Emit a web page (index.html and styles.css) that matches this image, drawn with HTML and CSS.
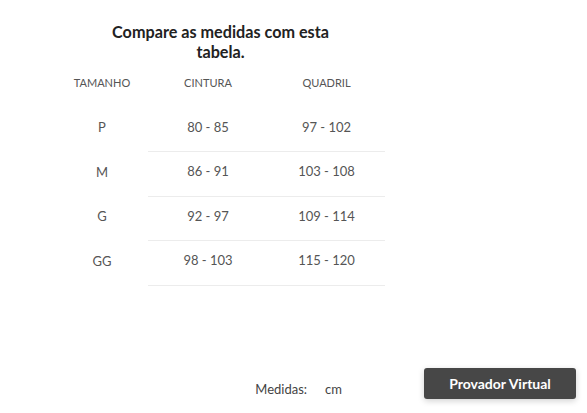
FILE: index.html
```html
<!DOCTYPE html>
<html lang="pt">
<head>
<meta charset="utf-8">
<link rel="stylesheet" href="styles.css">
</head>
<body>
<div class="page">
  <div class="chart">
    <h1 class="title">Compare as medidas com esta<br>tabela.</h1>
    <div class="grid">
      <div class="cell head c1">TAMANHO</div>
      <div class="cell head c2">CINTURA</div>
      <div class="cell head c3">QUADRIL</div>

      <div class="cell c1">P</div>
      <div class="cell c2 line">80 - 85</div>
      <div class="cell c3 line">97 - 102</div>

      <div class="cell c1">M</div>
      <div class="cell c2 line">86 - 91</div>
      <div class="cell c3 line">103 - 108</div>

      <div class="cell c1">G</div>
      <div class="cell c2 line">92 - 97</div>
      <div class="cell c3 line">109 - 114</div>

      <div class="cell c1">GG</div>
      <div class="cell c2 line">98 - 103</div>
      <div class="cell c3 line">115 - 120</div>
    </div>
  </div>
  <div class="footer">
    <span class="label">Medidas:</span>
    <span class="unit">cm</span>
    <button class="btn">Provador Virtual</button>
  </div>
</div>
</body>
</html>
```
FILE: styles.css
```css
html, body {
  margin: 0;
  padding: 0;
  background: #fff;
}
body {
  font-family: "Lato", "Open Sans", sans-serif;
  color: #555;
}
.page {
  width: 587px;
  height: 413px;
  display: flex;
  flex-direction: column;
  box-sizing: border-box;
}
.chart {
  margin-left: 56px;
  width: 329px;
  padding-top: 22px;
}
.title {
  margin: 0;
  text-align: center;
  font-size: 16.2px;
  line-height: 20px;
  font-weight: 700;
  color: #222;
}
.grid {
  display: grid;
  grid-template-columns: 92px 120px 117px;
  grid-auto-rows: 44.5px;
  margin-top: 1px;
}
.cell {
  display: flex;
  align-items: center;
  justify-content: center;
  font-size: 13px;
  color: #555;
  box-sizing: border-box;
  padding-bottom: 5px;
}
.cell.head {
  font-size: 11px;
  color: #555;
}
.cell.line {
  border-bottom: 1px solid #ececec;
}
.footer {
  margin-top: auto;
  display: flex;
  align-items: center;
  justify-content: flex-end;
  padding: 0 11px 14px 0;
}
.label {
  font-size: 13px;
  color: #444;
  margin-top: 11px;
}
.unit {
  font-size: 13px;
  color: #444;
  margin-left: 18px;
  margin-right: 82px;
  margin-top: 11px;
}
.btn {
  width: 152px;
  height: 31px;
  border: none;
  border-radius: 3px;
  background: #474747;
  color: #fff;
  font-family: "Lato", "Open Sans", sans-serif;
  font-weight: 700;
  font-size: 14px;
  box-shadow: 0 2px 6px rgba(0,0,0,0.18);
  padding: 0;
}
```
